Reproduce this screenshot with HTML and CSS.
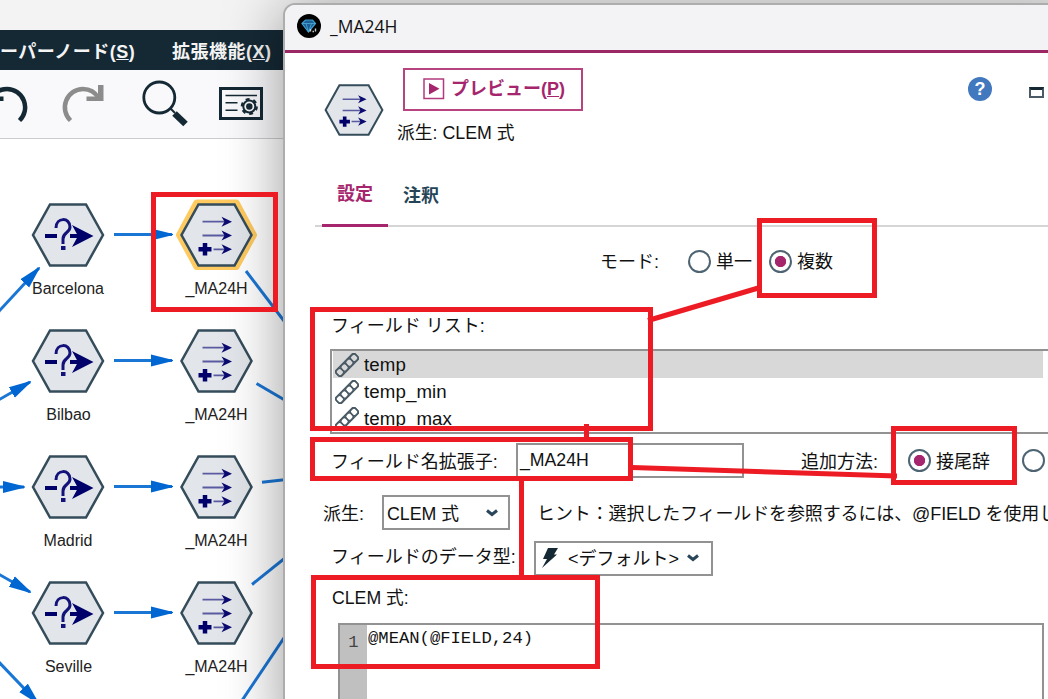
FILE: index.html
```html
<!DOCTYPE html>
<html lang="ja">
<head>
    <meta charset="UTF-8">
    <meta name="viewport" content="width=device-width, initial-scale=1.0">
    <title>_MA24H</title>
    <link rel="stylesheet" href="styles.css">
</head>

<body>
    <div class="screen">
        <!-- メイン画面 -->
        <div class="app">
            <div class="menubar">
                <span class="menu-super">ーパーノード(<u>S</u>)</span>
                <span class="menu-ext">拡張機能(<u>X</u>)</span>
            </div>
            <div class="toolbar">
                <svg class="tool" width="30" height="68" viewBox="0 70 30 68">
                    <path d="M19.500 120.500A18.300 18.300 0 0 0 7 89A18 18 0 0 0 -8.500 98" fill="none" stroke="#152935" stroke-width="4.500"/>
                    <path d="M-8 85H-13.500V101H3.500V96.500H-8Z" fill="#152935"/>
                </svg>
                <svg class="tool redo" width="46" height="68" viewBox="60 70 46 68">
                    <path d="M70.500 120.500A18.300 18.300 0 0 1 83 89A18 18 0 0 1 98.500 98" fill="none" stroke="#8c8c8c" stroke-width="4.500"/>
                    <path d="M98 85H103.500V101H86.500V96.500H98Z" fill="#8c8c8c"/>
                </svg>
                <svg class="tool search" width="50" height="68" viewBox="140 70 50 68">
                    <circle cx="159.300" cy="97.500" r="15.500" fill="none" stroke="#152935" stroke-width="2.800"/>
                    <path d="M170.500 108.500L175 113" stroke="#152935" stroke-width="2"/>
                    <path d="M174.500 113.500L185.500 124" stroke="#152935" stroke-width="6.500"/>
                </svg>
                <svg class="tool options" width="44" height="68" viewBox="219 70 44 68">
                    <rect x="220.500" y="88.500" width="41" height="30" fill="none" stroke="#152935" stroke-width="3"/>
                    <path d="M225.500 95.500H257M225.500 102.700H237.500M225.500 110.300H237.500" stroke="#152935" stroke-width="1.500"/>
                    <circle cx="249.300" cy="106.500" r="6" fill="none" stroke="#152935" stroke-width="2"/>
                    <circle cx="249.300" cy="106.500" r="7.400" fill="none" stroke="#152935" stroke-width="2.400" stroke-dasharray="3.875 3.875"/>
                    <circle cx="249.300" cy="106.500" r="3.200" fill="#152935"/>
                </svg>
            </div>
            <svg class="canvas" width="300" height="560" viewBox="0 139 300 560">
                <defs>
                    <marker id="arrow" markerUnits="userSpaceOnUse" markerWidth="23" markerHeight="14" refX="21" refY="7" orient="auto">
                        <path d="M0 1L22 6.500V7.500L0 13Z" fill="#0066d1"/>
                    </marker>
                    <g id="hex">
                        <path d="M-18 -30.500H18L35 0L18 30.500H-18L-35 0Z" fill="#e2e6ea" stroke="#354c5b" stroke-width="2.500"/>
                    </g>
                    <g id="deriveMark">
                        <path d="M-14 -13.300H10M-14 .500H10M-3 14.300H10" stroke="#5a5aa0" stroke-width="1.800"/>
                        <path d="M5 -18.300L15.500 -13.300L5 -8.300L8 -13.300ZM5 -4.500L15.500 .500L5 5.500L8 .500ZM5 9.300L15.500 14.300L5 19.300L8 14.300Z" fill="#0a0a70"/>
                        <path d="M-18 14.300H-5M-11.500 8V20.600" stroke="#00006b" stroke-width="4.500"/>
                    </g>
                    <g id="derive">
                        <use href="#hex"/>
                        <use href="#deriveMark"/>
                    </g>
                    <g id="select">
                        <use href="#hex"/>
                        <path d="M-23 1H-11M2 1H10" stroke="#00006b" stroke-width="4"/>
                        <path d="M4 -10L25.500 1L4 12L10 1Z" fill="#00006b"/>
                        <path d="M-12 -7C-12 -18 2 -18 2 -8C2 -2 -5 -3 -5 4V9" fill="none" stroke="#12127a" stroke-width="3"/>
                        <path d="M-7 11H-2.500V15H-7Z" fill="#12127a"/>
                    </g>
                </defs>
                <g class="edges">
                    <path d="M-5 315.500L39 268"/>
                    <path d="M-5 402L30 382"/>
                    <path d="M-5 487H24"/>
                    <path d="M-5 572L30 592"/>
                    <path d="M-5 658L38 703"/>
                    <path d="M114 234.500H172"/>
                    <path d="M114 360.500H172"/>
                    <path d="M114 486.500H172"/>
                    <path d="M114 612.500H172"/>
                </g>
                <g class="outlets">
                    <path d="M246 271L297 338"/>
                    <path d="M256.500 383.500L300 409"/>
                    <path d="M262 482.300L300 478"/>
                    <path d="M252 584.500L300 546"/>
                    <path d="M241 702L300 614"/>
                </g>
                <use href="#select" x="68" y="235"/>
                <use href="#select" x="68" y="361"/>
                <use href="#select" x="68" y="487"/>
                <use href="#select" x="68" y="613"/>
                <path d="M196.500 202.500H236.500L254 235L236.500 267H196.500L179 235Z" fill="none" stroke="#ffca60" stroke-width="6" stroke-linejoin="round"/>
                <use href="#derive" x="216.500" y="235"/>
                <use href="#derive" x="216.500" y="361"/>
                <use href="#derive" x="216.500" y="487"/>
                <use href="#derive" x="216.500" y="613"/>
                <g class="labels">
                    <text x="68" y="294">Barcelona</text>
                    <text x="68.500" y="420">Bilbao</text>
                    <text x="68" y="546">Madrid</text>
                    <text x="68.500" y="672">Seville</text>
                    <text x="216.500" y="294">_MA24H</text>
                    <text x="216.500" y="420">_MA24H</text>
                    <text x="216.500" y="546">_MA24H</text>
                    <text x="216.500" y="672">_MA24H</text>
                </g>
            </svg>
        </div>

        <!-- 派生ノードのダイアログ -->
        <div class="dialog">
            <div class="titlebar">
                <svg width="24" height="24" viewBox="0 0 24 24">
                    <circle cx="12" cy="12" r="12" fill="#000"/>
                    <path d="M5 9.500L8.500 6H15.500L18.500 9.500L11.500 18Z" fill="#1c5f96" stroke="#3a9fd0" stroke-width="1.200"/>
                    <path d="M5 9.500H18.500M9 9.500L11.500 18L14.500 9.500" fill="none" stroke="#4fa9d6" stroke-width=".8"/>
                    <path d="M13.500 17.500V15M15.500 17.500H17M18.500 17.500V14.500" stroke="#ccc" stroke-width="1.400"/>
                </svg>
                <span>_MA24H</span>
            </div>

            <div class="head">
                <svg class="node-icon" width="60" height="56" viewBox="-37 -34.500 74 69">
                    <use href="#derive"/>
                </svg>
                <div class="head-main">
                    <div class="preview">
                        <svg width="22" height="22" viewBox="0 0 22 22">
                            <rect x="1" y="1" width="19.500" height="19.500" fill="none" stroke="#b13a7d" stroke-width="1.500"/>
                            <path d="M6 5L16.500 10.700L6 16.500Z" fill="#a6266e"/>
                        </svg>
                        <span>プレビュー(<u>P</u>)</span>
                    </div>
                    <div class="subtitle">派生: CLEM 式</div>
                </div>
                <div class="help">?</div>
                <div class="restore"></div>
            </div>

            <div class="tabs">
                <div class="tab active">設定</div>
                <div class="tab">注釈</div>
            </div>

            <div class="row mode">
                <span class="mode-label">モード:</span>
                <span class="radio"></span><span class="mode-one">単一</span>
                <span class="radio on"></span><span>複数</span>
            </div>

            <div class="list-label">フィールド リスト:</div>
            <div class="list">
                <div class="item selected"><svg class="ruler" viewBox="0 0 24 24"><use href="#rule"/></svg>temp</div>
                <div class="item"><svg class="ruler" viewBox="0 0 24 24"><use href="#rule"/></svg>temp_min</div>
                <div class="item"><svg class="ruler" viewBox="0 0 24 24"><use href="#rule"/></svg>temp_max</div>
            </div>

            <div class="row ext">
                <span class="ext-label">フィールド名拡張子:</span>
                <div class="input">_MA24H</div>
                <span class="add-label">追加方法:</span>
                <span class="radio on"></span><span class="suffix">接尾辞</span>
                <span class="radio"></span>
            </div>

            <div class="row derive">
                <span class="derive-label">派生:</span>
                <div class="select clem">
                    <span>CLEM 式</span>
                    <svg width="12" height="8" viewBox="0 0 12 8"><path d="M1 1.500L6 5.500L11 1.500" fill="none" stroke="#29465a" stroke-width="3"/></svg>
                </div>
                <span class="hint">ヒント：選択したフィールドを参照するには、@FIELD を使用し</span>
            </div>

            <div class="row type">
                <span class="type-label">フィールドのデータ型:</span>
                <div class="select default">
                    <svg width="20" height="24" viewBox="0 0 20 24"><path d="M8 2H18L14 8.500H17L2 22L7 13H3Z" fill="#152935"/></svg>
                    <span>&lt;デフォルト&gt;</span>
                    <svg width="12" height="8" viewBox="0 0 12 8"><path d="M1 1.500L6 5.500L11 1.500" fill="none" stroke="#29465a" stroke-width="3"/></svg>
                </div>
            </div>

            <div class="clem-label">CLEM 式:</div>
            <div class="editor">
                <div class="gutter">1</div>
                <div class="code">@MEAN(@FIELD,24)</div>
            </div>
        </div>

        <!-- 赤枠の注記 -->
        <svg class="marks" width="1048" height="699" viewBox="0 0 1048 699">
            <defs>
                <g id="rule" fill="none" stroke="#4b5b66" stroke-width="1.500" transform="rotate(-45 12 12)">
                    <rect x="-1.500" y="8" width="27" height="8" rx="2.500"/>
                    <rect x="-1.500" y="8.500" width="6.750" height="7" rx="2.500"/>
                    <rect x="5.250" y="8.500" width="6.750" height="7" rx="2.500"/>
                    <rect x="12" y="8.500" width="6.750" height="7" rx="2.500"/>
                    <rect x="18.750" y="8.500" width="6.750" height="7" rx="2.500"/>
                </g>
            </defs>
            <rect x="153.500" y="194.500" width="122" height="115"/>
            <rect x="759.500" y="220.500" width="115" height="75"/>
            <rect x="312.500" y="309.500" width="338" height="119"/>
            <rect x="312.500" y="439.500" width="318" height="39"/>
            <rect x="893.500" y="428.500" width="121" height="54"/>
            <rect x="313.500" y="577.500" width="284" height="89"/>
            <path d="M648 320.500L760 287.500M586.500 424V440M632 467.500L897 476M521.500 480V577"/>
        </svg>
    </div>
</body>

</html>
```
FILE: styles.css
```css
* {
    margin: 0;
    padding: 0;
    box-sizing: border-box;
}

body {
    overflow: hidden;
    font-family: "Liberation Sans", "Noto Sans CJK JP", sans-serif;
    font-size: 18px;
    color: #111;
}

.screen {
    position: relative;
    width: 1048px;
    height: 699px;
    overflow: hidden;
    background-color: #fff;
}

svg {
    display: block;
    flex: none;
}

/* メイン画面 */
.app {
    padding-top: 30px;
    background-color: #f3f3f3;
}

.menubar {
    display: flex;
    align-items: center;
    height: 40px;
    padding-bottom: 1px;
    background-color: #152935;
    color: #f4f4f4;
    font-weight: bold;
    font-size: 18px;
    letter-spacing: .5px;
    white-space: nowrap;
}

.menu-super {
    width: 172px;
}

.toolbar {
    display: flex;
    height: 69px;
    background-color: #f9f9fb;
    border-bottom: 1px solid #ccc;
}

.redo {
    margin-left: 30px;
}

.search {
    margin-left: 34px;
}

.options {
    margin-left: 29px;
}

.canvas {
    background-color: #fff;
}

.edges path,
.outlets path {
    fill: none;
    stroke: #1a76d5;
    stroke-width: 3px;
}

.edges path {
    marker-end: url(#arrow);
}

.labels {
    font-size: 16px;
    fill: #222;
    text-anchor: middle;
}

/* ダイアログ */
.dialog {
    position: absolute;
    left: 283px;
    top: 3px;
    width: 800px;
    height: 740px;
    border: 2px solid #adadad;
    border-radius: 12px;
    background-color: #fff;
    box-shadow: 0 6px 60px rgba(0, 0, 0, .4);
    overflow: hidden;
}

.titlebar {
    display: flex;
    align-items: center;
    gap: 9px;
    height: 48px;
    padding-left: 12px;
    padding-bottom: 3px;
    border-bottom: 3px solid #9b2765;
    background-color: #f3f2f5;
    font-family: "Open Sans", sans-serif;
    font-size: 17.5px;
}

.head {
    display: flex;
    height: 115px;
}

.node-icon {
    margin: 29px 0 0 39px;
}

.head-main {
    width: 561px;
    padding: 15px 0 0 13px;
}

.preview {
    display: flex;
    align-items: center;
    gap: 6px;
    width: 180px;
    height: 43px;
    margin-left: 6px;
    padding: 0 0 2px 18px;
    border: 2px solid #b8447f;
    color: #a6266e;
    font-weight: bold;
    white-space: nowrap;
}

.preview span {
    padding-bottom: 3px;
}

.subtitle {
    margin-top: 9px;
    font-size: 17.8px;
    line-height: 26px;
}

.help {
    width: 24px;
    height: 24px;
    margin: 24px 0 0 23px;
    border-radius: 50%;
    background-color: #4178be;
    color: #fff;
    font-weight: bold;
    line-height: 24px;
    text-align: center;
}

.restore {
    width: 15px;
    height: 11px;
    margin: 34px 0 0 37px;
    border: 2px solid #4a5a66;
    border-top: 3px solid #152935;
}

.tabs {
    display: flex;
    height: 59px;
    margin-left: 30px;
    padding-left: 7px;
    border-bottom: 2px solid #d5d5d5;
    font-weight: bold;
    color: #264456;
    white-space: nowrap;
}

.tab {
    height: 59px;
    padding: 0 15px;
    line-height: 56px;
}

.active {
    width: 66px;
    border-bottom: 3px solid #a6266e;
    color: #a6266e;
    line-height: 52px;
}

.row {
    display: flex;
    align-items: center;
    white-space: nowrap;
}

.row > * {
    flex: none;
}

.radio {
    width: 23px;
    height: 23px;
    border: 2px solid #4f6472;
    border-radius: 50%;
}

.on {
    background: radial-gradient(circle, #a6266e 5.3px, transparent 6px);
}

.mode {
    height: 68px;
    padding-left: 315px;
}

.mode span:not(.radio) {
    padding-bottom: 2px;
}

.mode-label {
    width: 88px;
}

.mode-one {
    width: 53px;
}

.mode .radio,
.ext .radio {
    margin-right: 5px;
}

.list-label {
    height: 54px;
    padding-left: 46px;
    line-height: 62px;
}

.list {
    height: 85px;
    margin-left: 45px;
    padding-left: 1px;
    border: 2px solid #929292;
    overflow: hidden;
}

.item {
    display: flex;
    align-items: center;
    width: 710px;
    height: 27px;
    padding-left: 2px;
    font-size: 18.7px;
    letter-spacing: .1px;
}

.selected {
    background-color: #d8d8d8;
}

.ruler {
    width: 24px;
    height: 24px;
    margin-right: 5px;
}

.ext {
    height: 53px;
    padding-left: 46px;
}

.ext-label {
    width: 185px;
}

.ext span:not(.radio) {
    padding-bottom: 2px;
}

.input {
    width: 228px;
    height: 35px;
    margin-right: 57px;
    padding-left: 2px;
    border: 2px solid #929292;
    font-size: 17.7px;
    line-height: 31px;
}

.add-label {
    width: 107px;
}

.suffix {
    width: 86px;
}

.derive {
    height: 51px;
    padding-left: 38px;
}

.derive-label {
    width: 59px;
}

.derive span {
    padding-bottom: 2px;
}

.hint {
    letter-spacing: -.12px;
}

.select {
    display: flex;
    align-items: center;
    height: 35px;
    border: 2px solid #929292;
}

.clem {
    justify-content: space-between;
    width: 128px;
    margin-right: 27px;
    padding: 0 10px 0 3px;
    font-size: 17.8px;
}

.type {
    height: 40px;
    padding-left: 46px;
}

.type-label {
    width: 203px;
    padding-bottom: 6px;
}

.default {
    gap: 8px;
    width: 179px;
    padding-left: 4px;
}

.default span {
    padding-bottom: 2px;
}

.clem-label {
    height: 45px;
    padding-left: 47px;
    font-size: 17.7px;
    line-height: 41px;
}

.editor {
    display: flex;
    width: 706px;
    height: 200px;
    margin-left: 53px;
    border: 2px solid #929292;
    font-family: "Liberation Mono", monospace;
    font-size: 17.2px;
}

.gutter {
    width: 27px;
    padding-top: 8px;
    background-color: #c0c0c0;
    text-align: center;
    color: #444;
}

.code {
    padding: 4px 0 0 1px;
}

/* 注記 */
.marks {
    position: absolute;
    left: 0;
    top: 0;
}

.marks > rect,
.marks > path {
    fill: none;
    stroke: #ed1c24;
    stroke-width: 5px;
}
```
